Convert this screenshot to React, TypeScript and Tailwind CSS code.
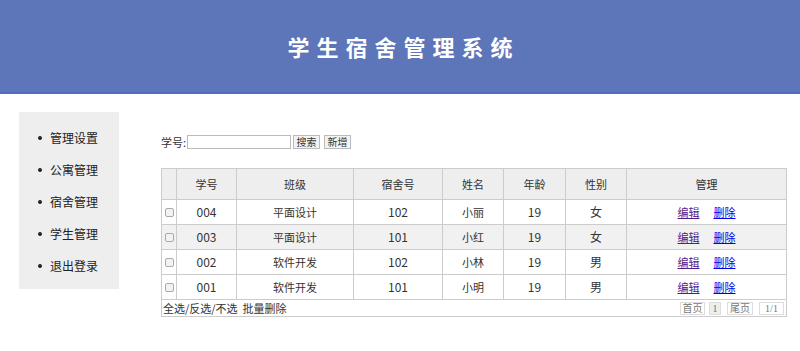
const rows = [
  { id: "004", cls: "平面设计", room: "102", name: "小丽", age: "19", sex: "女" },
  { id: "003", cls: "平面设计", room: "101", name: "小红", age: "19", sex: "女" },
  { id: "002", cls: "软件开发", room: "102", name: "小林", age: "19", sex: "男" },
  { id: "001", cls: "软件开发", room: "101", name: "小明", age: "19", sex: "男" },
];

const menu = ["管理设置", "公寓管理", "宿舍管理", "学生管理", "退出登录"];

export default function App() {
  return (
    <div
      className="w-[800px] h-[351px] bg-white text-[#333] text-[12px] overflow-hidden"
      style={{ fontFamily: '"Noto Sans CJK SC", "Noto Sans", sans-serif' }}
    >
      {/* header */}
      <div className="h-[94px] bg-[#5d76b9] border-b-2 border-[#4e6cc2] flex items-center justify-center">
        <h1 className="m-0 text-[22px] font-bold text-white tracking-[7px] pl-[7px] leading-none">
          学生宿舍管理系统
        </h1>
      </div>

      <div className="flex">
        {/* sidebar */}
        <div className="ml-[19px] mt-[18px] w-[100px] h-[177px] bg-[#eeeeee] pt-[10px]">
          {menu.map((m) => (
            <div key={m} className="h-[32px] flex items-center text-[12px] text-[#222]">
              <span className="ml-[19px] w-[4px] h-[4px] rounded-full bg-[#222]" />
              <span className="ml-[8px]">{m}</span>
            </div>
          ))}
        </div>

        {/* main */}
        <div className="ml-[42px] w-[626px]">
          <div className="mt-[41px] h-[14px] flex items-center text-[11px]">
            <span className="w-[26px]">学号:</span>
            <input className="w-[104px] h-[14px] border border-[#bbb] bg-white outline-none" />
            <button className="ml-[2px] w-[27px] h-[14px] border border-[#bbb] bg-[#f3f3f3] text-[10px] leading-none">
              搜索
            </button>
            <button className="ml-[4px] w-[27px] h-[14px] border border-[#bbb] bg-[#f3f3f3] text-[10px] leading-none">
              新增
            </button>
          </div>

          <table className="mt-[19px] w-[626px] border-collapse table-fixed border border-[#ccc]">
            <colgroup>
              <col className="w-[15px]" />
              <col className="w-[60px]" />
              <col className="w-[117px]" />
              <col className="w-[89px]" />
              <col className="w-[61px]" />
              <col className="w-[62px]" />
              <col className="w-[61px]" />
              <col />
            </colgroup>
            <thead>
              <tr className="h-[31px] bg-[#eeeeee] text-[11px]">
                <th className="border border-[#ccc] font-normal" />
                <th className="border border-[#ccc] font-normal">学号</th>
                <th className="border border-[#ccc] font-normal">班级</th>
                <th className="border border-[#ccc] font-normal">宿舍号</th>
                <th className="border border-[#ccc] font-normal">姓名</th>
                <th className="border border-[#ccc] font-normal">年龄</th>
                <th className="border border-[#ccc] font-normal">性别</th>
                <th className="border border-[#ccc] font-normal">管理</th>
              </tr>
            </thead>
            <tbody>
              {rows.map((r, i) => (
                <tr key={r.id} className={`h-[25px] text-center ${i === 1 ? "bg-[#f1f1f1]" : "bg-white"}`}>
                  <td className="border border-[#ccc] p-0">
                    <span className="block mx-auto w-[9px] h-[9px] rounded-[2px] border border-[#aaa] bg-[#f2f2f2]" />
                  </td>
                  <td className="border border-[#ccc]">{r.id}</td>
                  <td className="border border-[#ccc] text-[11px]">{r.cls}</td>
                  <td className="border border-[#ccc]">{r.room}</td>
                  <td className="border border-[#ccc] text-[11px]">{r.name}</td>
                  <td className="border border-[#ccc]">{r.age}</td>
                  <td className="border border-[#ccc]">{r.sex}</td>
                  <td className="border border-[#ccc] text-[11px]">
                    <a className="underline text-[#551a8b] mr-[14px]">编辑</a>
                    <a className="underline text-[#0000ee]">删除</a>
                  </td>
                </tr>
              ))}
              <tr className="h-[16px]">
                <td colSpan={8} className="border border-[#ccc] p-0">
                  <div className="flex items-center justify-between text-[11px] h-[16px]">
                    <span className="ml-[1px]">全选/反选/不选&nbsp;&nbsp;批量删除</span>
                    <div
                      className="flex items-center text-[10px] text-[#777] mr-[2px]"
                      style={{ fontFamily: '"Liberation Serif", "Noto Sans CJK SC", serif' }}
                    >
                      <span className="w-[25px] h-[13px] leading-[12px] text-center border border-[#ddd]">首页</span>
                      <span className="ml-[4px] w-[12px] h-[13px] leading-[12px] text-center border border-[#ddd] bg-[#eee]">1</span>
                      <span className="ml-[6px] w-[26px] h-[13px] leading-[12px] text-center border border-[#ddd]">尾页</span>
                      <span className="ml-[6px] w-[25px] h-[13px] leading-[12px] text-center border border-[#ddd]">1/1</span>
                    </div>
                  </div>
                </td>
              </tr>
            </tbody>
          </table>
        </div>
      </div>
    </div>
  );
}
